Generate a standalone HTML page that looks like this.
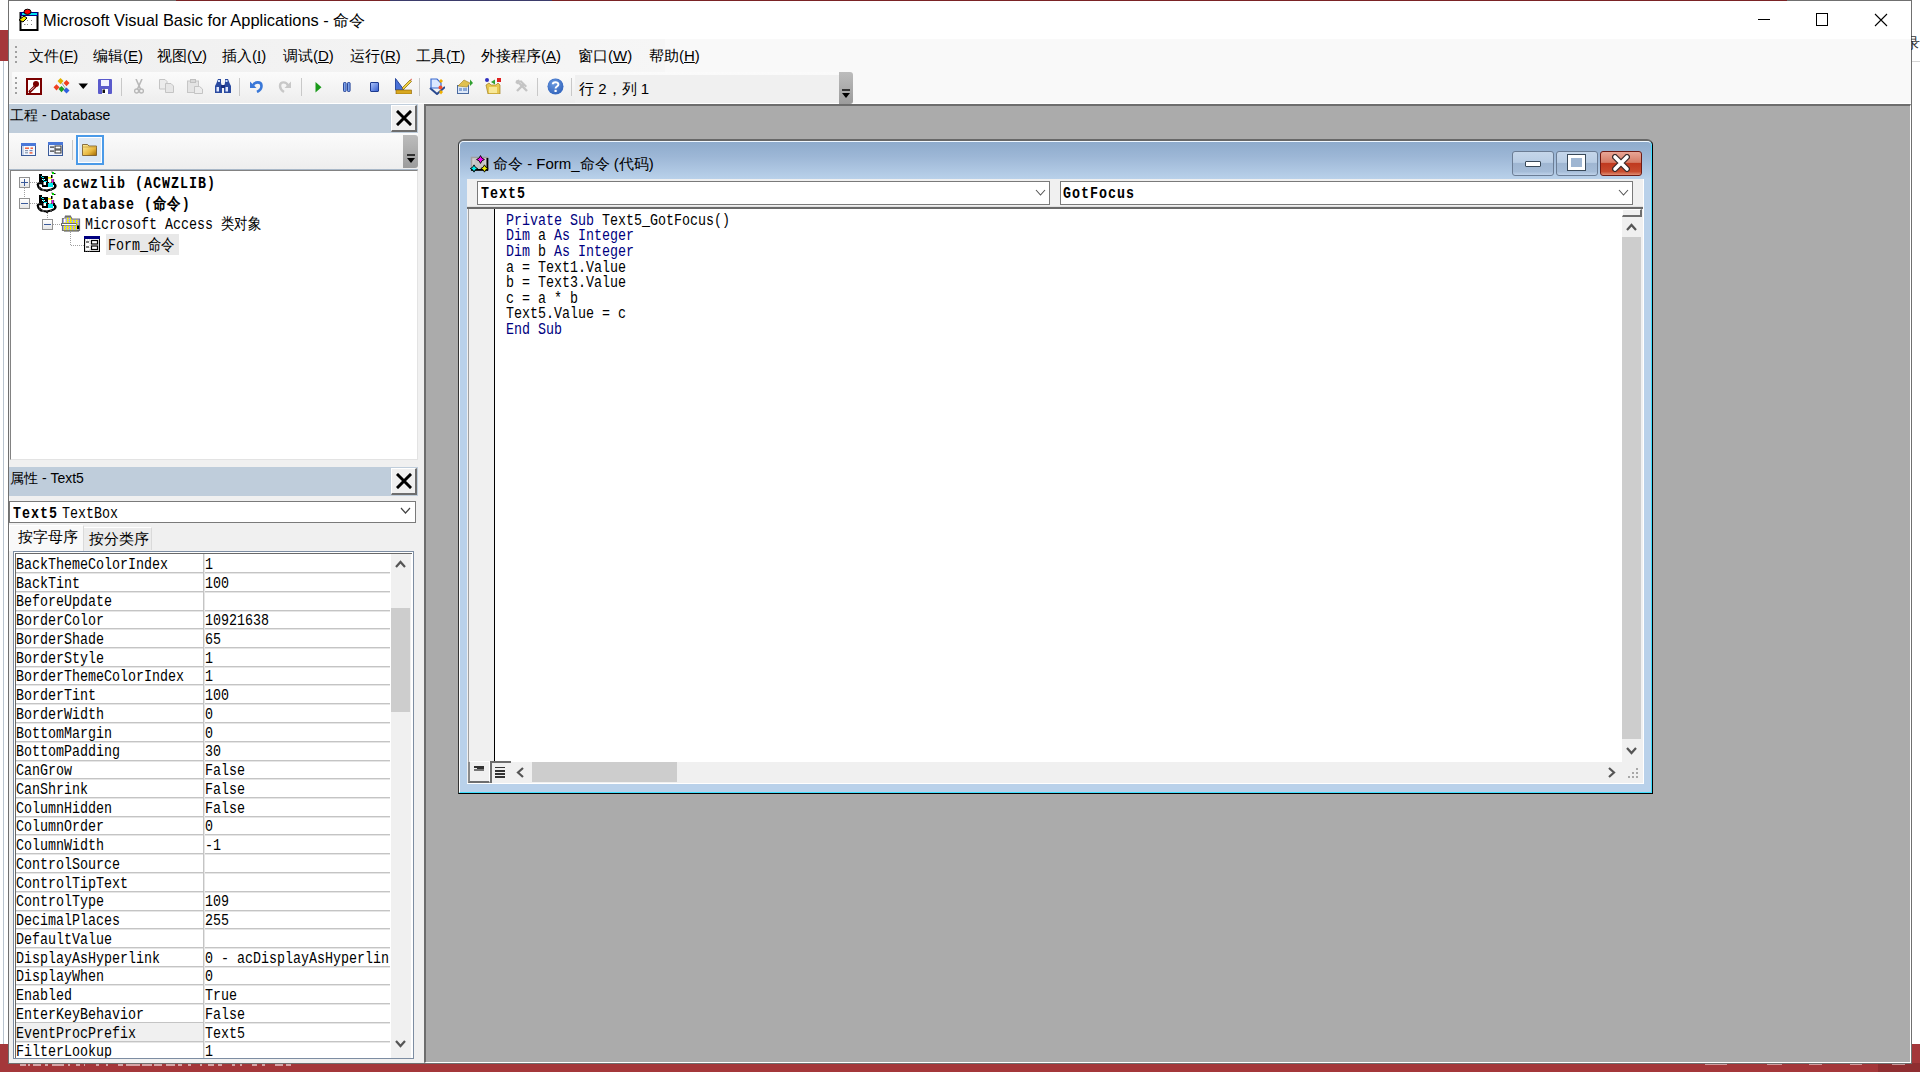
<!DOCTYPE html><html><head><meta charset="utf-8"><title>VBA</title><style>
html,body{margin:0;padding:0;}
body{width:1920px;height:1072px;overflow:hidden;position:relative;background:#fff;font-family:"Liberation Sans", sans-serif;}
div,span,svg{position:absolute;box-sizing:border-box;}
.t{white-space:pre;line-height:1;}
.m{font-family:"Liberation Mono", monospace;white-space:pre;line-height:1;transform-origin:0 0;transform:scaleX(0.8333);font-size:16px;}
</style></head><body>
<div style="left:0px;top:30px;width:8px;height:31px;background:#a4373a"></div>
<div style="left:3px;top:61px;width:1px;height:983px;background:#b9c4cf"></div>
<div style="left:0px;top:1044px;width:8px;height:28px;background:#a4373a"></div>
<div style="left:0px;top:1063px;width:1920px;height:9px;background:#a4373a"></div>
<div style="left:1911px;top:1044px;width:9px;height:28px;background:#a4373a"></div>
<div style="left:1878px;top:1063px;width:42px;height:9px;background:#8f2e31"></div>
<div style="left:1911px;top:61px;width:9px;height:1px;background:#d6d6d6"></div>
<div style="left:8px;top:0px;width:1904px;height:1064px;border:1px solid #707070;background:#fff"></div>
<div class="t" style="left:43px;top:12px;font-size:16.4px;color:#000">Microsoft Visual Basic for Applications - 命令</div>
<div style="left:1758px;top:19px;width:12px;height:1px;background:#000"></div>
<div style="left:1816px;top:13px;width:12px;height:13px;border:1px solid #000"></div>
<svg style="left:1874px;top:13px" width="14" height="14" viewBox="0 0 14 14"><path d="M1 1L13 13M13 1L1 13" stroke="#000" stroke-width="1.1"/></svg>
<div style="left:9px;top:39px;width:1902px;height:65px;background:#f9f9f9"></div>
<div style="left:9px;top:39px;width:656px;height:33px;background:linear-gradient(90deg,#efefef,#f6f6f6)"></div>
<div style="left:9px;top:72px;width:3px;height:31px;background:#efefef"></div>
<div style="left:12px;top:72px;width:841px;height:31px;background:linear-gradient(#fbfbfb,#f3f3f3 60%,#ededed);border-radius:3px 3px 0 0"></div>
<div style="left:9px;top:103px;width:1902px;height:1px;background:#fff"></div>
<div style="left:15px;top:46px;width:2px;height:2px;background:#a0a0a0"></div>
<div style="left:15px;top:77px;width:2px;height:2px;background:#a0a0a0"></div>
<div style="left:15px;top:51px;width:2px;height:2px;background:#a0a0a0"></div>
<div style="left:15px;top:82px;width:2px;height:2px;background:#a0a0a0"></div>
<div style="left:15px;top:56px;width:2px;height:2px;background:#a0a0a0"></div>
<div style="left:15px;top:87px;width:2px;height:2px;background:#a0a0a0"></div>
<div style="left:15px;top:61px;width:2px;height:2px;background:#a0a0a0"></div>
<div style="left:15px;top:92px;width:2px;height:2px;background:#a0a0a0"></div>
<div class="t" style="left:29px;top:48px;font-size:15px;color:#000">文件(<u>F</u>)</div>
<div class="t" style="left:93px;top:48px;font-size:15px;color:#000">编辑(<u>E</u>)</div>
<div class="t" style="left:157px;top:48px;font-size:15px;color:#000">视图(<u>V</u>)</div>
<div class="t" style="left:222px;top:48px;font-size:15px;color:#000">插入(<u>I</u>)</div>
<div class="t" style="left:283px;top:48px;font-size:15px;color:#000">调试(<u>D</u>)</div>
<div class="t" style="left:350px;top:48px;font-size:15px;color:#000">运行(<u>R</u>)</div>
<div class="t" style="left:416px;top:48px;font-size:15px;color:#000">工具(<u>T</u>)</div>
<div class="t" style="left:481px;top:48px;font-size:15px;color:#000">外接程序(<u>A</u>)</div>
<div class="t" style="left:578px;top:48px;font-size:15px;color:#000">窗口(<u>W</u>)</div>
<div class="t" style="left:649px;top:48px;font-size:15px;color:#000">帮助(<u>H</u>)</div>
<div style="left:575px;top:75px;width:264px;height:28px;background:#f0f0f0"></div>
<div class="t" style="left:579px;top:81px;font-size:15px;color:#000">行 2，列 1</div>
<div style="left:839px;top:72px;width:14px;height:32px;background:linear-gradient(#bcbcbc,#9c9c9c);border-radius:0 3px 3px 0"></div>
<div style="left:842px;top:89px;width:8px;height:2px;background:#333"></div>
<svg style="left:842px;top:93px" width="8" height="6" viewBox="0 0 8 6"><path d="M0 0H8L4 5z" fill="#000"/></svg>
<div style="left:121px;top:78px;width:1px;height:18px;background:#c8c8c8"></div>
<div style="left:239px;top:78px;width:1px;height:18px;background:#c8c8c8"></div>
<div style="left:301px;top:78px;width:1px;height:18px;background:#c8c8c8"></div>
<div style="left:419px;top:78px;width:1px;height:18px;background:#c8c8c8"></div>
<div style="left:537px;top:78px;width:1px;height:18px;background:#c8c8c8"></div>
<div style="left:571px;top:78px;width:1px;height:18px;background:#c8c8c8"></div>
<div style="left:424px;top:104px;width:1487px;height:959px;background:#ababab;border-top:2px solid #6d6d6d;border-left:2px solid #6d6d6d;border-right:1px solid #fff;border-bottom:1px solid #fff"></div>
<div style="left:417px;top:104px;width:7px;height:959px;background:#f0f0f0"></div>
<div style="left:9px;top:104px;width:408px;height:959px;background:#f0f0f0"></div>
<div style="left:9px;top:104px;width:409px;height:29px;background:#bfcddb"></div>
<div class="t" style="left:10px;top:108px;font-size:14px;color:#000">工程 - Database</div>
<div style="left:391px;top:105px;width:26px;height:27px;background:#f0f0f0;border-top:1px solid #fff;border-left:1px solid #fff;border-right:2px solid #6e6e6e;border-bottom:2px solid #6e6e6e"></div><svg style="left:396px;top:110px" width="16" height="16" viewBox="0 0 16 16"><path d="M2 2L14 14M14 2L2 14" stroke="#000" stroke-width="3" stroke-linecap="square"/></svg>
<div style="left:9px;top:133px;width:409px;height:36px;background:linear-gradient(#fbfbfb,#eeeeee)"></div>
<div style="left:403px;top:135px;width:15px;height:33px;background:linear-gradient(#bcbcbc,#9c9c9c);border-radius:0 3px 3px 0"></div>
<div style="left:407px;top:154px;width:8px;height:2px;background:#333"></div>
<svg style="left:407px;top:158px" width="8" height="6" viewBox="0 0 8 6"><path d="M0 0H8L4 5z" fill="#000"/></svg>
<div style="left:72px;top:140px;width:1px;height:20px;background:#c8c8c8"></div>
<div style="left:76px;top:136px;width:28px;height:29px;background:#cde4f7;border:1px solid #3399ff"></div>
<div style="left:9px;top:169px;width:409px;height:1px;background:#a9b8c8"></div>
<div style="left:10px;top:170px;width:408px;height:290px;background:#fff;border:1px solid #828282;border-right-color:#e3e3e3;border-bottom-color:#e3e3e3"></div>
<div style="left:9px;top:467px;width:409px;height:29px;background:#bfcddb"></div>
<div class="t" style="left:10px;top:471px;font-size:14px;color:#000">属性 - Text5</div>
<div style="left:391px;top:468px;width:26px;height:27px;background:#f0f0f0;border-top:1px solid #fff;border-left:1px solid #fff;border-right:2px solid #6e6e6e;border-bottom:2px solid #6e6e6e"></div><svg style="left:396px;top:473px" width="16" height="16" viewBox="0 0 16 16"><path d="M2 2L14 14M14 2L2 14" stroke="#000" stroke-width="3" stroke-linecap="square"/></svg>
<div style="left:9px;top:501px;width:407px;height:22px;background:#fff;border:1px solid #7a7a7a"></div>
<svg style="left:400px;top:507px" width="11" height="8" viewBox="0 0 11 8"><path d="M1 1L5.5 6L10 1" stroke="#444" stroke-width="1.2" fill="none"/></svg>
<div style="left:9px;top:525px;width:75px;height:26px;background:#f9f9f9;border-top:1px solid #fff;border-left:1px solid #fff;border-right:1px solid #dadada"></div>
<div style="left:84px;top:527px;width:68px;height:23px;background:#ececec;border-top:1px solid #fff;border-right:1px solid #dadada"></div>
<div class="t" style="left:18px;top:529px;font-size:15px;color:#000">按字母序</div>
<div class="t" style="left:89px;top:531px;font-size:15px;color:#000">按分类序</div>
<div style="left:13px;top:551px;width:401px;height:508px;background:#fff;border:1px solid #7d8da2"></div>
<div style="left:15px;top:553px;width:397px;height:505px;background:#fff;border-top:1px solid #696969;border-left:1px solid #696969;overflow:hidden"><div style="left:0px;top:18px;width:374px;height:1px;background:#c4c4c4"></div><div style="left:0px;top:19px;width:374px;height:1px;background:#e6e6e6"></div><div class="m" style="left:0px;top:2.99px;color:#000">BackThemeColorIndex</div><div class="m" style="left:189px;top:2.99px;color:#000">1</div><div style="left:0px;top:37px;width:374px;height:1px;background:#c4c4c4"></div><div style="left:0px;top:38px;width:374px;height:1px;background:#e6e6e6"></div><div class="m" style="left:0px;top:21.74px;color:#000">BackTint</div><div class="m" style="left:189px;top:21.74px;color:#000">100</div><div style="left:0px;top:56px;width:374px;height:1px;background:#c4c4c4"></div><div style="left:0px;top:57px;width:374px;height:1px;background:#e6e6e6"></div><div class="m" style="left:0px;top:40.49px;color:#000">BeforeUpdate</div><div class="m" style="left:189px;top:40.49px;color:#000"></div><div style="left:0px;top:74px;width:374px;height:1px;background:#c4c4c4"></div><div style="left:0px;top:75px;width:374px;height:1px;background:#e6e6e6"></div><div class="m" style="left:0px;top:59.24px;color:#000">BorderColor</div><div class="m" style="left:189px;top:59.24px;color:#000">10921638</div><div style="left:0px;top:93px;width:374px;height:1px;background:#c4c4c4"></div><div style="left:0px;top:94px;width:374px;height:1px;background:#e6e6e6"></div><div class="m" style="left:0px;top:77.99px;color:#000">BorderShade</div><div class="m" style="left:189px;top:77.99px;color:#000">65</div><div style="left:0px;top:112px;width:374px;height:1px;background:#c4c4c4"></div><div style="left:0px;top:113px;width:374px;height:1px;background:#e6e6e6"></div><div class="m" style="left:0px;top:96.74px;color:#000">BorderStyle</div><div class="m" style="left:189px;top:96.74px;color:#000">1</div><div style="left:0px;top:130px;width:374px;height:1px;background:#c4c4c4"></div><div style="left:0px;top:131px;width:374px;height:1px;background:#e6e6e6"></div><div class="m" style="left:0px;top:115.49px;color:#000">BorderThemeColorIndex</div><div class="m" style="left:189px;top:115.49px;color:#000">1</div><div style="left:0px;top:149px;width:374px;height:1px;background:#c4c4c4"></div><div style="left:0px;top:150px;width:374px;height:1px;background:#e6e6e6"></div><div class="m" style="left:0px;top:134.24px;color:#000">BorderTint</div><div class="m" style="left:189px;top:134.24px;color:#000">100</div><div style="left:0px;top:168px;width:374px;height:1px;background:#c4c4c4"></div><div style="left:0px;top:169px;width:374px;height:1px;background:#e6e6e6"></div><div class="m" style="left:0px;top:152.99px;color:#000">BorderWidth</div><div class="m" style="left:189px;top:152.99px;color:#000">0</div><div style="left:0px;top:187px;width:374px;height:1px;background:#c4c4c4"></div><div style="left:0px;top:188px;width:374px;height:1px;background:#e6e6e6"></div><div class="m" style="left:0px;top:171.74px;color:#000">BottomMargin</div><div class="m" style="left:189px;top:171.74px;color:#000">0</div><div style="left:0px;top:206px;width:374px;height:1px;background:#c4c4c4"></div><div style="left:0px;top:207px;width:374px;height:1px;background:#e6e6e6"></div><div class="m" style="left:0px;top:190.49px;color:#000">BottomPadding</div><div class="m" style="left:189px;top:190.49px;color:#000">30</div><div style="left:0px;top:224px;width:374px;height:1px;background:#c4c4c4"></div><div style="left:0px;top:225px;width:374px;height:1px;background:#e6e6e6"></div><div class="m" style="left:0px;top:209.24px;color:#000">CanGrow</div><div class="m" style="left:189px;top:209.24px;color:#000">False</div><div style="left:0px;top:243px;width:374px;height:1px;background:#c4c4c4"></div><div style="left:0px;top:244px;width:374px;height:1px;background:#e6e6e6"></div><div class="m" style="left:0px;top:227.99px;color:#000">CanShrink</div><div class="m" style="left:189px;top:227.99px;color:#000">False</div><div style="left:0px;top:262px;width:374px;height:1px;background:#c4c4c4"></div><div style="left:0px;top:263px;width:374px;height:1px;background:#e6e6e6"></div><div class="m" style="left:0px;top:246.74px;color:#000">ColumnHidden</div><div class="m" style="left:189px;top:246.74px;color:#000">False</div><div style="left:0px;top:280px;width:374px;height:1px;background:#c4c4c4"></div><div style="left:0px;top:281px;width:374px;height:1px;background:#e6e6e6"></div><div class="m" style="left:0px;top:265.49px;color:#000">ColumnOrder</div><div class="m" style="left:189px;top:265.49px;color:#000">0</div><div style="left:0px;top:299px;width:374px;height:1px;background:#c4c4c4"></div><div style="left:0px;top:300px;width:374px;height:1px;background:#e6e6e6"></div><div class="m" style="left:0px;top:284.24px;color:#000">ColumnWidth</div><div class="m" style="left:189px;top:284.24px;color:#000">-1</div><div style="left:0px;top:318px;width:374px;height:1px;background:#c4c4c4"></div><div style="left:0px;top:319px;width:374px;height:1px;background:#e6e6e6"></div><div class="m" style="left:0px;top:302.99px;color:#000">ControlSource</div><div class="m" style="left:189px;top:302.99px;color:#000"></div><div style="left:0px;top:337px;width:374px;height:1px;background:#c4c4c4"></div><div style="left:0px;top:338px;width:374px;height:1px;background:#e6e6e6"></div><div class="m" style="left:0px;top:321.74px;color:#000">ControlTipText</div><div class="m" style="left:189px;top:321.74px;color:#000"></div><div style="left:0px;top:356px;width:374px;height:1px;background:#c4c4c4"></div><div style="left:0px;top:357px;width:374px;height:1px;background:#e6e6e6"></div><div class="m" style="left:0px;top:340.49px;color:#000">ControlType</div><div class="m" style="left:189px;top:340.49px;color:#000">109</div><div style="left:0px;top:374px;width:374px;height:1px;background:#c4c4c4"></div><div style="left:0px;top:375px;width:374px;height:1px;background:#e6e6e6"></div><div class="m" style="left:0px;top:359.24px;color:#000">DecimalPlaces</div><div class="m" style="left:189px;top:359.24px;color:#000">255</div><div style="left:0px;top:393px;width:374px;height:1px;background:#c4c4c4"></div><div style="left:0px;top:394px;width:374px;height:1px;background:#e6e6e6"></div><div class="m" style="left:0px;top:377.99px;color:#000">DefaultValue</div><div class="m" style="left:189px;top:377.99px;color:#000"></div><div style="left:0px;top:412px;width:374px;height:1px;background:#c4c4c4"></div><div style="left:0px;top:413px;width:374px;height:1px;background:#e6e6e6"></div><div class="m" style="left:0px;top:396.74px;color:#000">DisplayAsHyperlink</div><div class="m" style="left:189px;top:396.74px;color:#000">0 - acDisplayAsHyperlin</div><div style="left:0px;top:430px;width:374px;height:1px;background:#c4c4c4"></div><div style="left:0px;top:431px;width:374px;height:1px;background:#e6e6e6"></div><div class="m" style="left:0px;top:415.49px;color:#000">DisplayWhen</div><div class="m" style="left:189px;top:415.49px;color:#000">0</div><div style="left:0px;top:449px;width:374px;height:1px;background:#c4c4c4"></div><div style="left:0px;top:450px;width:374px;height:1px;background:#e6e6e6"></div><div class="m" style="left:0px;top:434.24px;color:#000">Enabled</div><div class="m" style="left:189px;top:434.24px;color:#000">True</div><div style="left:0px;top:468px;width:374px;height:1px;background:#c4c4c4"></div><div style="left:0px;top:469px;width:374px;height:1px;background:#e6e6e6"></div><div class="m" style="left:0px;top:452.99px;color:#000">EnterKeyBehavior</div><div class="m" style="left:189px;top:452.99px;color:#000">False</div><div style="left:0px;top:469px;width:187px;height:18px;background:#f0f0f0"></div><div style="left:0px;top:487px;width:374px;height:1px;background:#c4c4c4"></div><div style="left:0px;top:488px;width:374px;height:1px;background:#e6e6e6"></div><div class="m" style="left:0px;top:471.74px;color:#000">EventProcPrefix</div><div class="m" style="left:189px;top:471.74px;color:#000">Text5</div><div style="left:0px;top:506px;width:374px;height:1px;background:#c4c4c4"></div><div style="left:0px;top:507px;width:374px;height:1px;background:#e6e6e6"></div><div class="m" style="left:0px;top:490.49px;color:#000">FilterLookup</div><div class="m" style="left:189px;top:490.49px;color:#000">1</div><div style="left:187px;top:0px;width:1px;height:505px;background:#c4c4c4"></div><div style="left:188px;top:0px;width:1px;height:505px;background:#e6e6e6"></div></div>
<div style="left:391px;top:554px;width:20px;height:504px;background:#f0f0f0"></div>
<div style="left:391px;top:608px;width:19px;height:104px;background:#cdcdcd"></div>
<svg style="left:395px;top:560px" width="11" height="9" viewBox="0 0 11 9"><path d="M1 7L5.5 2L10 7" stroke="#555" stroke-width="2.2" fill="none"/></svg>
<svg style="left:395px;top:1039px" width="11" height="9" viewBox="0 0 11 9"><path d="M1 2L5.5 7L10 2" stroke="#555" stroke-width="2.2" fill="none"/></svg>
<div style="left:458px;top:139px;width:1195px;height:655px;background:#b9d1ea;border:1px solid #333;border-top:2px solid #686868;border-right-color:#000;border-bottom-color:#000;border-radius:6px 6px 0 0"></div>
<div style="left:459px;top:141px;width:1193px;height:652px;border-right:1px solid #3ee0ff;border-bottom:1px solid #3ee0ff;border-top:1px solid #f0f8ff;border-left:1px solid #fff;border-radius:5px 5px 0 0"></div>
<div style="left:460px;top:142px;width:1191px;height:37px;background:linear-gradient(#8eabcc,#9db7d6 40%,#b9d1ea);border-radius:4px 4px 0 0"></div>
<div class="t" style="left:493px;top:156px;font-size:15px;color:#000">命令 - Form_命令 (代码)</div>
<div style="left:1512px;top:151px;width:42px;height:25px;background:linear-gradient(#c5d6ea 0%,#b9cde4 45%,#9fb6d2 50%,#a5bcd7 85%,#bfd3ea 100%);border:1px solid #6b7d95;border-radius:3px"></div>
<div style="left:1556px;top:151px;width:42px;height:25px;background:linear-gradient(#c5d6ea 0%,#b9cde4 45%,#9fb6d2 50%,#a5bcd7 85%,#bfd3ea 100%);border:1px solid #6b7d95;border-radius:3px"></div>
<div style="left:1600px;top:151px;width:42px;height:25px;background:linear-gradient(#e8a696 0%,#d67c66 45%,#c0391f 50%,#c74b2e 85%,#e08e74 100%);border:1px solid #6e1b14;border-radius:3px"></div>
<div style="left:1525px;top:161px;width:16px;height:6px;background:#fff;border:1px solid #3a4a5a;border-radius:1px"></div>
<div style="left:1568px;top:155px;width:17px;height:15px;background:#9fb6d2;border:3px solid #fff;outline:1px solid #3a4a5a"></div>
<svg style="left:1612px;top:154px" width="18" height="18" viewBox="0 0 18 18"><path d="M3 3L15 15M15 3L3 15" stroke="#3a2a2a" stroke-width="6" stroke-linecap="round"/><path d="M3 3L15 15M15 3L3 15" stroke="#fff" stroke-width="3.6" stroke-linecap="round"/></svg>
<div style="left:467px;top:179px;width:1177px;height:605px;background:#f0f0f0;border-right:1px solid #fff;border-bottom:1px solid #fff"></div>
<div style="left:477px;top:181px;width:573px;height:24px;background:#fff;border:1px solid #7a7a7a"></div>
<div style="left:1060px;top:181px;width:573px;height:24px;background:#fff;border:1px solid #7a7a7a"></div>
<svg style="left:1035px;top:189px" width="11" height="8" viewBox="0 0 11 8"><path d="M1 1L5.5 6L10 1" stroke="#555" stroke-width="1.1" fill="none"/></svg>
<svg style="left:1618px;top:189px" width="11" height="8" viewBox="0 0 11 8"><path d="M1 1L5.5 6L10 1" stroke="#555" stroke-width="1.1" fill="none"/></svg>
<div style="left:467px;top:206px;width:1176px;height:1px;background:#e0e0e0"></div>
<div style="left:467px;top:207px;width:1176px;height:2px;background:#6a6a6a"></div>
<div style="left:468px;top:209px;width:26px;height:553px;background:#f0f0f0;border-left:1px solid #a0a0a0"></div>
<div style="left:494px;top:209px;width:1px;height:553px;background:#000"></div>
<div style="left:495px;top:209px;width:1127px;height:553px;background:#fff"></div>
<div style="left:1622px;top:209px;width:20px;height:553px;background:#f0f0f0"></div>
<div style="left:1622px;top:209px;width:20px;height:8px;background:#f0f0f0;border-top:1px solid #fff;border-left:1px solid #fff;border-right:2px solid #6e6e6e;border-bottom:2px solid #6e6e6e"></div>
<div style="left:1622px;top:237px;width:19px;height:502px;background:#cdcdcd"></div>
<svg style="left:1626px;top:223px" width="11" height="9" viewBox="0 0 11 9"><path d="M1 7L5.5 2L10 7" stroke="#555" stroke-width="2.2" fill="none"/></svg>
<svg style="left:1626px;top:746px" width="11" height="9" viewBox="0 0 11 9"><path d="M1 2L5.5 7L10 2" stroke="#555" stroke-width="2.2" fill="none"/></svg>
<div style="left:468px;top:762px;width:1175px;height:21px;background:#f0f0f0"></div>
<div style="left:468px;top:761px;width:22px;height:22px;background:#f0f0f0;border-top:1px solid #fff;border-left:2px solid #8a8a8a;border-right:1px solid #fff;border-bottom:2px solid #6e6e6e"></div>
<div style="left:490px;top:761px;width:21px;height:22px;background:#f0f0f0;border-top:2px solid #6e6e6e;border-left:2px solid #6e6e6e"></div>
<div style="left:474px;top:766px;width:10px;height:2px;background:#333"></div>
<div style="left:474px;top:769px;width:10px;height:2px;background:#777"></div>
<div style="left:477px;top:768px;width:7px;height:1px;background:#333"></div>
<div style="left:495px;top:767px;width:10px;height:1px;background:#333"></div>
<div style="left:495px;top:770px;width:10px;height:1.5px;background:#333"></div>
<div style="left:495px;top:773px;width:10px;height:1.5px;background:#333"></div>
<div style="left:495px;top:776px;width:10px;height:1.5px;background:#333"></div>
<div style="left:532px;top:762px;width:145px;height:20px;background:#cdcdcd"></div>
<svg style="left:516px;top:767px" width="9" height="11" viewBox="0 0 9 11"><path d="M7 1L2 5.5L7 10" stroke="#555" stroke-width="2.2" fill="none"/></svg>
<svg style="left:1607px;top:767px" width="9" height="11" viewBox="0 0 9 11"><path d="M2 1L7 5.5L2 10" stroke="#555" stroke-width="2.2" fill="none"/></svg>
<div style="left:1636px;top:768px;width:2px;height:2px;background:#a8a8a8"></div>
<div style="left:1632px;top:772px;width:2px;height:2px;background:#a8a8a8"></div>
<div style="left:1636px;top:772px;width:2px;height:2px;background:#a8a8a8"></div>
<div style="left:1628px;top:776px;width:2px;height:2px;background:#a8a8a8"></div>
<div style="left:1632px;top:776px;width:2px;height:2px;background:#a8a8a8"></div>
<div style="left:1636px;top:776px;width:2px;height:2px;background:#a8a8a8"></div>
<div class="m" style="left:506px;top:212.64px"><span style="position:static;color:#000080">Private Sub </span><span style="position:static;color:#000">Text5_GotFocus()</span></div>
<div class="m" style="left:506px;top:228.27px"><span style="position:static;color:#000080">Dim </span><span style="position:static;color:#000">a </span><span style="position:static;color:#000080">As Integer</span></div>
<div class="m" style="left:506px;top:243.89px"><span style="position:static;color:#000080">Dim </span><span style="position:static;color:#000">b </span><span style="position:static;color:#000080">As Integer</span></div>
<div class="m" style="left:506px;top:259.51px"><span style="position:static;color:#000">a = Text1.Value</span></div>
<div class="m" style="left:506px;top:275.14px"><span style="position:static;color:#000">b = Text3.Value</span></div>
<div class="m" style="left:506px;top:290.76px"><span style="position:static;color:#000">c = a * b</span></div>
<div class="m" style="left:506px;top:306.39px"><span style="position:static;color:#000">Text5.Value = c</span></div>
<div class="m" style="left:506px;top:322.01px"><span style="position:static;color:#000080">End Sub</span></div>
<div class="m" style="left:481px;top:186.14px;font-weight:bold;letter-spacing:1.2px">Text5</div>
<div class="m" style="left:1063px;top:186.14px;font-weight:bold;letter-spacing:1.2px">GotFocus</div>
<div class="m" style="left:13px;top:505.94px;font-weight:bold;letter-spacing:1.2px">Text5</div>
<div class="m" style="left:62px;top:505.94px">TextBox</div>
<div style="left:24px;top:188px;width:1px;height:10px;background:repeating-linear-gradient(180deg,#a0a0a0 0 1px,transparent 1px 2px)"></div>
<div style="left:30px;top:182px;width:7px;height:1px;background:repeating-linear-gradient(90deg,#a0a0a0 0 1px,transparent 1px 2px)"></div>
<div style="left:30px;top:203px;width:7px;height:1px;background:repeating-linear-gradient(90deg,#a0a0a0 0 1px,transparent 1px 2px)"></div>
<div style="left:47px;top:213px;width:1px;height:6px;background:repeating-linear-gradient(180deg,#a0a0a0 0 1px,transparent 1px 2px)"></div>
<div style="left:53px;top:224px;width:8px;height:1px;background:repeating-linear-gradient(90deg,#a0a0a0 0 1px,transparent 1px 2px)"></div>
<div style="left:70px;top:232px;width:1px;height:13px;background:repeating-linear-gradient(180deg,#a0a0a0 0 1px,transparent 1px 2px)"></div>
<div style="left:71px;top:245px;width:13px;height:1px;background:repeating-linear-gradient(90deg,#a0a0a0 0 1px,transparent 1px 2px)"></div>
<div style="left:19px;top:177px;width:11px;height:11px;background:linear-gradient(#fff,#e6e6e6);border:1px solid #919191"></div><div style="left:21px;top:182px;width:7px;height:1px;background:#3b5b9b"></div><div style="left:24px;top:179px;width:1px;height:7px;background:#3b5b9b"></div>
<div style="left:19px;top:198px;width:11px;height:11px;background:linear-gradient(#fff,#e6e6e6);border:1px solid #919191"></div><div style="left:21px;top:203px;width:7px;height:1px;background:#3b5b9b"></div>
<div style="left:42px;top:219px;width:11px;height:11px;background:linear-gradient(#fff,#e6e6e6);border:1px solid #919191"></div><div style="left:44px;top:224px;width:7px;height:1px;background:#3b5b9b"></div>
<div class="m" style="left:63px;top:175.54px;font-weight:bold;letter-spacing:1.2px">acwzlib (ACWZLIB)</div>
<div class="m" style="left:63px;top:196.54px;font-weight:bold;letter-spacing:1.2px">Database (命令)</div>
<div class="m" style="left:85px;top:217.24px">Microsoft Access 类对象</div>
<div style="left:106px;top:234px;width:73px;height:21px;background:#e8e8e8"></div>
<div class="m" style="left:108px;top:238.24px">Form_命令</div>
<svg style="left:18px;top:8px" width="22" height="23" viewBox="0 0 22 23"><rect x="2.5" y="5" width="17" height="17" fill="#fff" stroke="#000" stroke-width="2"/><rect x="2" y="4" width="18" height="4" fill="#000080"/><rect x="4" y="5" width="15" height="2" fill="#00e0f0"/><circle cx="6" cy="13" r="0" /><path d="M1 12L6 8L9 10L5 14z" fill="#f0e000" stroke="#000" stroke-width="1"/><ellipse cx="9.5" cy="3.8" rx="3.5" ry="2.6" fill="#ff0000" stroke="#000" stroke-width="1"/><rect x="9" y="12" width="1" height="1" fill="#888"/><rect x="13" y="12" width="1" height="1" fill="#888"/><rect x="9" y="16" width="1" height="1" fill="#888"/><rect x="13" y="16" width="1" height="1" fill="#888"/><rect x="6" y="16" width="1.5" height="1" fill="#888"/></svg>
<svg style="left:26px;top:78px" width="16" height="17" viewBox="0 0 16 17"><rect x="1" y="1" width="14" height="15" fill="#fff" stroke="#7a0000" stroke-width="2"/><path d="M4 13.5L9 8.5" stroke="#7a0000" stroke-width="3" stroke-linecap="round"/><circle cx="10" cy="6" r="3" fill="#7a0000"/><path d="M4.5 12.5L8.5 9" stroke="#fff" stroke-width="0.8"/></svg>
<svg style="left:52px;top:77px" width="20" height="18" viewBox="0 0 20 18"><path d="M9 5L14 12M5 10L14 13" stroke="#9aa" stroke-width="1"/><path d="M8.5 1L11.5 4L8.5 7.2L5.5 4z" fill="#e2b000"/><path d="M14.5 3L17.5 6L14.5 9.2L11.5 6z" fill="#f04020"/><path d="M4.5 7.300000000000001L7.5 10.3L4.5 13.5L1.5 10.3z" fill="#f04020"/><path d="M9.5 9L12.5 12L9.5 15.2L6.5 12z" fill="#20a020"/><path d="M14.5 10.4L17.5 13.4L14.5 16.6L11.5 13.4z" fill="#3060e0"/></svg>
<svg style="left:78px;top:83px" width="11" height="7" viewBox="0 0 11 7"><path d="M0.5 0.5H10L5.25 6z" fill="#000"/></svg>
<svg style="left:98px;top:79px" width="14" height="15" viewBox="0 0 14 15"><rect x="0" y="0" width="14" height="15" rx="1" fill="#5a5acc"/><rect x="3" y="1" width="8" height="6" fill="#f2f2ff"/><rect x="4" y="10" width="6" height="5" fill="#fff"/><rect x="4.5" y="10.5" width="2.5" height="3.5" fill="#111"/></svg>
<svg style="left:134px;top:79px" width="10" height="15" viewBox="0 0 10 15"><path d="M2 0L6.5 10M8 0L3.5 10" stroke="#b8b8b8" stroke-width="1.6"/><circle cx="2.6" cy="12" r="2" fill="none" stroke="#b8b8b8" stroke-width="1.4"/><circle cx="7.4" cy="12" r="2" fill="none" stroke="#b8b8b8" stroke-width="1.4"/></svg>
<svg style="left:159px;top:79px" width="15" height="14" viewBox="0 0 15 14"><path d="M0.5 0.5H6L8 2.5V10H0.5z" fill="#ececec" stroke="#c4c4c4"/><path d="M6.5 4.5H12L14.5 7V13.5H6.5z" fill="#e6e6e6" stroke="#c4c4c4"/></svg>
<svg style="left:187px;top:79px" width="16" height="15" viewBox="0 0 16 15"><rect x="0.5" y="2" width="11" height="11.5" fill="#e4e4e4" stroke="#c6c6c6"/><rect x="3.5" y="0.5" width="5" height="3" fill="#d8d8d8" stroke="#c0c0c0"/><path d="M7.5 7.5H12.5L15.5 10V14.5H7.5z" fill="#ececec" stroke="#c4c4c4"/></svg>
<svg style="left:215px;top:79px" width="16" height="14" viewBox="0 0 16 14"><path d="M3 0H6V4L7 7V14H0V7L1.5 4z" fill="#2a4aa0"/><path d="M10 0H13L14.5 4L16 7V14H9V7L10 4z" fill="#2a4aa0"/><rect x="6" y="6" width="4" height="3" fill="#1a3080"/><rect x="1.5" y="8" width="2.5" height="4.5" fill="#dfe8ff"/><rect x="10.5" y="8" width="2.5" height="4.5" fill="#dfe8ff"/><rect x="3" y="1" width="2" height="2" fill="#cfe0ff"/><rect x="10.5" y="1" width="2" height="2" fill="#cfe0ff"/></svg>
<svg style="left:250px;top:79px" width="14" height="14" viewBox="0 0 14 14"><path d="M3 6.5C4.5 2.5 11.5 2 11.5 7C11.5 10 9 12 7 13" stroke="#3a78d8" stroke-width="2.6" fill="none"/><path d="M0 2.5V9H6.5z" fill="#3a78d8"/></svg>
<svg style="left:278px;top:79px" width="13" height="14" viewBox="0 0 13 14"><path d="M10 6.5C8.5 2.5 2 2 2 7C2 10 4.5 12 6 13" stroke="#c8c8c8" stroke-width="2.4" fill="none"/><path d="M13 2.5V9H6.5z" fill="#c8c8c8"/></svg>
<svg style="left:315px;top:82px" width="7" height="11" viewBox="0 0 7 11"><path d="M0.5 0L6.5 5.25L0.5 10.5z" fill="#1a9a1a"/></svg>
<svg style="left:343px;top:82px" width="8" height="10" viewBox="0 0 8 10"><rect x="0.5" y="0.5" width="2.6" height="9" rx="0.8" fill="#7aa0ea" stroke="#1c3a90" stroke-width="0.9"/><rect x="4.5" y="0.5" width="2.6" height="9" rx="0.8" fill="#7aa0ea" stroke="#1c3a90" stroke-width="0.9"/></svg>
<div style="left:370px;top:82px;width:9px;height:10px;background:linear-gradient(135deg,#a8c0f8,#3a62d0);border:1px solid #1c3a90;border-radius:1px"></div>
<svg style="left:395px;top:78px" width="17" height="16" viewBox="0 0 17 16"><path d="M0.5 0.5V12H9z" fill="#4a72d8" stroke="#2a4aa0" stroke-width="1"/><path d="M7 10L15 2L16.5 3.5L8.5 11.5z" fill="#f0d040" stroke="#806000" stroke-width="0.7"/><rect x="1" y="12" width="15.5" height="4" fill="#d8a820" stroke="#8a6000" stroke-width="0.6"/><path d="M15 1.5L16.5 0.5L17 2.5" fill="#e06050"/></svg>
<svg style="left:429px;top:78px" width="16" height="17" viewBox="0 0 16 17"><path d="M1 10L8 16L16 9" stroke="#2a4a90" stroke-width="2" fill="none"/><path d="M2 1H8L12 5V10H2z" fill="#dce8ff" stroke="#3a6ad0" stroke-width="1.2"/><circle cx="11.5" cy="9.5" r="2" fill="#f05030"/><path d="M12 1L14 3L12 5L10 3z" fill="#f0b000"/><path d="M12 12L14 14L12 16.5L10 14z" fill="#f0b000"/></svg>
<svg style="left:457px;top:79px" width="16" height="15" viewBox="0 0 16 15"><rect x="0.5" y="6.5" width="11" height="8" fill="#dde8f8" stroke="#4a6aa0"/><rect x="2" y="9" width="3" height="3" fill="#8aa8d8"/><rect x="6" y="9" width="4" height="3" fill="#8aa8d8"/><path d="M1 7L7 1L13 4L10 8z" fill="#e0c050" stroke="#a08020" stroke-width="0.6"/><path d="M13 0.5L16 4L13 7z" fill="#30a030"/></svg>
<svg style="left:485px;top:78px" width="16" height="16" viewBox="0 0 16 16"><circle cx="2" cy="2" r="2" fill="#3030c0"/><path d="M6 4L10 1.5V6.5z" fill="#30a030"/><rect x="12" y="0" width="4" height="4" fill="#e02020"/><path d="M1 7L4 5L6 7H11L13 5L15 7V16H3z" fill="#e8c850" stroke="#a08020" stroke-width="0.7"/><rect x="4" y="9" width="8" height="6" fill="#f8e898"/></svg>
<svg style="left:515px;top:79px" width="14" height="14" viewBox="0 0 14 14"><path d="M2 12L9 5" stroke="#c4c4c4" stroke-width="2.4"/><path d="M6 1L12 7L10.5 8.5L4.5 2.5z" fill="#c4c4c4"/><path d="M4 4L12 12" stroke="#c4c4c4" stroke-width="2.4"/><path d="M1 1.5L4 0.5L5.5 3L3 5.5L0.5 4z" fill="#c4c4c4"/></svg>
<svg style="left:547px;top:78px" width="17" height="17" viewBox="0 0 17 17"><circle cx="8.5" cy="8.5" r="8" fill="#3d70c8"/><circle cx="8.5" cy="8.5" r="7.6" fill="url(#hg)"/><defs><radialGradient id="hg" cx="0.4" cy="0.3" r="0.8"><stop offset="0" stop-color="#6a9ae0"/><stop offset="1" stop-color="#2f60b8"/></radialGradient></defs><path d="M5.8 6.2C5.8 3.6 11.4 3.4 11.4 6.4C11.4 8.4 8.6 8.6 8.6 10.4" stroke="#fff" stroke-width="2" fill="none"/><rect x="7.5" y="11.8" width="2.2" height="2.2" fill="#fff"/></svg>
<svg style="left:21px;top:143px" width="15" height="13" viewBox="0 0 15 13"><rect x="0.5" y="0.5" width="14" height="12" fill="#f4f8ff" stroke="#3a5a98"/><rect x="0" y="0" width="15" height="3" fill="#4a78d8"/><rect x="1" y="3" width="2" height="9" fill="#c8d4e8"/><rect x="4" y="4.5" width="4" height="1.4" fill="#f05a30"/><rect x="9.5" y="4.5" width="2.5" height="1.4" fill="#f05a30"/><rect x="4" y="7" width="3" height="1.2" fill="#8898b0"/><rect x="8.5" y="7" width="3" height="1.2" fill="#7088b8"/><rect x="4" y="9.2" width="3" height="1.2" fill="#8898b0"/><rect x="8.5" y="9.2" width="3" height="1.4" fill="#f05a30"/></svg>
<svg style="left:48px;top:142px" width="15" height="14" viewBox="0 0 15 14"><rect x="0.5" y="0.5" width="14" height="13" fill="#eef3ff" stroke="#3a5a98"/><rect x="0" y="0" width="15" height="3" fill="#4a78d8"/><rect x="2" y="4.5" width="4" height="1.2" fill="#333"/><rect x="2" y="8.5" width="4" height="1.2" fill="#333"/><rect x="7" y="4" width="6" height="3" fill="#fff" stroke="#333" stroke-width="1"/><rect x="7" y="8" width="6" height="3" fill="#fff" stroke="#333" stroke-width="1"/></svg>
<div style="left:76px;top:135px;width:28px;height:30px;background:#dde8f4;border:2px solid #4a9ae8;box-shadow:inset 0 0 0 1px #fff"></div>
<svg style="left:82px;top:143px" width="15" height="13" viewBox="0 0 15 13"><defs><linearGradient id="fg" x1="0" y1="0" x2="1" y2="1"><stop offset="0" stop-color="#fff0a0"/><stop offset="0.6" stop-color="#e8b840"/><stop offset="1" stop-color="#a06800"/></linearGradient></defs><path d="M0.5 1.5H5.5L7 3H14.5V12.5H0.5z" fill="url(#fg)" stroke="#705020" stroke-width="0.8"/><path d="M0.5 4H14.5" stroke="#c8a040" stroke-width="0.8"/></svg>
<svg style="left:34px;top:170px" width="26" height="24" viewBox="0 0 26 24"><path d="M4 15.5C3 14 4.5 13 7 13L9 14H14L18 13.5C20 13.5 22 15 21.5 16.5C21 18 19 19 17 19.5L13 20.5L9 20C6 19.5 4 17 4 15.5z" fill="#fff" stroke="#000" stroke-width="2.2"/><rect x="8" y="19" width="2" height="2" fill="#444"/><rect x="12" y="20" width="2" height="2" fill="#222"/><rect x="16" y="19" width="2" height="2" fill="#444"/><rect x="5" y="17" width="2" height="2" fill="#333"/><rect x="5" y="4" width="3" height="8" fill="#000"/><rect x="6" y="6" width="6" height="3" fill="#000"/><rect x="11" y="6" width="3" height="7" fill="#000"/><rect x="8" y="10" width="6" height="7" fill="#000"/><rect x="9.5" y="12" width="2.5" height="3" fill="#fff"/><rect x="13" y="12" width="2" height="2" fill="#000"/><rect x="19" y="12" width="2" height="3" fill="#000"/><rect x="20" y="14" width="2" height="3" fill="#000"/><rect x="7" y="6" width="1" height="1" fill="#00e8f0"/><rect x="8" y="7" width="2" height="1" fill="#00e8f0"/><rect x="9" y="9" width="1" height="2" fill="#00e8f0"/><rect x="10" y="11" width="3" height="1" fill="#00e8f0"/><rect x="14" y="13" width="5" height="4" fill="#00e8f0"/><rect x="13" y="7" width="1" height="1" fill="#000"/><rect x="14" y="7" width="4" height="1.6" fill="#f0f000"/><rect x="17" y="5" width="1.5" height="3" fill="#000"/><rect x="18" y="2" width="2" height="2" fill="#00e000"/><rect x="17.5" y="1.5" width="1" height="1" fill="#000"/><rect x="20" y="3" width="1.5" height="1" fill="#000"/><rect x="18" y="9" width="1.5" height="3.5" fill="#f000f0"/><rect x="17.5" y="9" width="0.5" height="4" fill="#000"/><rect x="19.5" y="9" width="0.6" height="4" fill="#000"/></svg>
<svg style="left:34px;top:191px" width="26" height="24" viewBox="0 0 26 24"><path d="M4 15.5C3 14 4.5 13 7 13L9 14H14L18 13.5C20 13.5 22 15 21.5 16.5C21 18 19 19 17 19.5L13 20.5L9 20C6 19.5 4 17 4 15.5z" fill="#fff" stroke="#000" stroke-width="2.2"/><rect x="8" y="19" width="2" height="2" fill="#444"/><rect x="12" y="20" width="2" height="2" fill="#222"/><rect x="16" y="19" width="2" height="2" fill="#444"/><rect x="5" y="17" width="2" height="2" fill="#333"/><rect x="5" y="4" width="3" height="8" fill="#000"/><rect x="6" y="6" width="6" height="3" fill="#000"/><rect x="11" y="6" width="3" height="7" fill="#000"/><rect x="8" y="10" width="6" height="7" fill="#000"/><rect x="9.5" y="12" width="2.5" height="3" fill="#fff"/><rect x="13" y="12" width="2" height="2" fill="#000"/><rect x="19" y="12" width="2" height="3" fill="#000"/><rect x="20" y="14" width="2" height="3" fill="#000"/><rect x="7" y="6" width="1" height="1" fill="#00e8f0"/><rect x="8" y="7" width="2" height="1" fill="#00e8f0"/><rect x="9" y="9" width="1" height="2" fill="#00e8f0"/><rect x="10" y="11" width="3" height="1" fill="#00e8f0"/><rect x="14" y="13" width="5" height="4" fill="#00e8f0"/><rect x="13" y="7" width="1" height="1" fill="#000"/><rect x="14" y="7" width="4" height="1.6" fill="#f0f000"/><rect x="17" y="5" width="1.5" height="3" fill="#000"/><rect x="18" y="2" width="2" height="2" fill="#00e000"/><rect x="17.5" y="1.5" width="1" height="1" fill="#000"/><rect x="20" y="3" width="1.5" height="1" fill="#000"/><rect x="18" y="9" width="1.5" height="3.5" fill="#f000f0"/><rect x="17.5" y="9" width="0.5" height="4" fill="#000"/><rect x="19.5" y="9" width="0.6" height="4" fill="#000"/></svg>
<svg style="left:58px;top:212px" width="26" height="22" viewBox="0 0 26 22"><defs><pattern id="ck" width="3" height="2" patternUnits="userSpaceOnUse"><rect width="3" height="2" fill="#a8a8f0"/><rect width="2" height="1" fill="#f0f000"/><rect x="0" y="1" width="1" height="1" fill="#f0f000"/></pattern></defs><rect x="7" y="3.5" width="6" height="1.8" fill="#666"/><path d="M4.5 18.5V6.5H7V5H13L14 7H21.5V18.5z" fill="url(#ck)" stroke="#777" stroke-width="1.2"/><rect x="6" y="6.5" width="1.5" height="4" fill="#fff"/><rect x="3.5" y="11.5" width="14.5" height="2" fill="#fff" stroke="#6a6a6a" stroke-width="1"/><rect x="6" y="13.5" width="13" height="5" fill="url(#ck)"/><rect x="19" y="13.5" width="2.2" height="3.5" fill="#000"/><path d="M6 19H21" stroke="#666" stroke-width="1.2"/></svg>
<svg style="left:84px;top:236px" width="16" height="16" viewBox="0 0 16 16"><rect x="0.5" y="0.5" width="15" height="15" fill="#fff" stroke="#000" stroke-width="1.2"/><rect x="0" y="0" width="16" height="3" fill="#000080"/><rect x="7.5" y="4.5" width="6" height="3.5" fill="#fff" stroke="#000" stroke-width="1.2"/><rect x="7.5" y="10" width="6" height="3.5" fill="#fff" stroke="#000" stroke-width="1.2"/><path d="M2 6H5M2 11H5" stroke="#000" stroke-width="1.2"/><path d="M1 4H6V15H1" fill="none" stroke="#aaa" stroke-width="0.6" stroke-dasharray="1 1"/></svg>
<svg style="left:468px;top:152px" width="24" height="24" viewBox="0 0 24 24"><rect x="3.5" y="5.5" width="16" height="12.5" fill="#d0d0d0" stroke="#a0a0a0" stroke-width="1.5"/><rect x="18.5" y="6" width="1.8" height="12.5" fill="#000"/><rect x="3" y="17" width="17" height="1.8" fill="#000"/><rect x="6.5" y="7" width="10" height="10" fill="#c4c4c4"/><path d="M12.5 3.5800000000000005L13.9 6.1L16.419999999999998 7.5L13.9 8.9L12.5 11.42L11.1 8.9L8.58 7.5L11.1 6.1z" fill="#f000f0" stroke="#000" stroke-width="0.9"/><path d="M6 12.86L7.3 15.2L9.64 16.5L7.3 17.8L6 20.14L4.7 17.8L2.3600000000000003 16.5L4.7 15.2z" fill="#00f0f0" stroke="#000" stroke-width="0.9"/><path d="M16.5 12.86L17.8 15.2L20.14 16.5L17.8 17.8L16.5 20.14L15.2 17.8L12.86 16.5L15.2 15.2z" fill="#f0f000" stroke="#000" stroke-width="0.9"/></svg>
<div style="left:176px;top:0px;width:214px;height:1px;background:#7a2325"></div>
<div style="left:390px;top:0px;width:162px;height:1px;background:#3b3b6b"></div>
<div style="left:552px;top:0px;width:1235px;height:1px;background:#7a2325"></div>
<div style="left:1911px;top:30px;width:9px;height:22px;overflow:hidden"><div class="t" style="left:-6px;top:5px;font-size:15px;color:#333">录</div></div>
<div style="left:20px;top:1064px;width:6px;height:2px;background:rgba(255,255,255,.55)"></div>
<div style="left:28px;top:1064px;width:2px;height:2px;background:rgba(255,255,255,.55)"></div>
<div style="left:33px;top:1064px;width:8px;height:2px;background:rgba(255,255,255,.55)"></div>
<div style="left:45px;top:1064px;width:3px;height:2px;background:rgba(255,255,255,.55)"></div>
<div style="left:52px;top:1064px;width:12px;height:2px;background:rgba(255,255,255,.55)"></div>
<div style="left:68px;top:1064px;width:2px;height:2px;background:rgba(255,255,255,.55)"></div>
<div style="left:76px;top:1064px;width:4px;height:2px;background:rgba(255,255,255,.55)"></div>
<div style="left:84px;top:1064px;width:1px;height:2px;background:rgba(255,255,255,.55)"></div>
<div style="left:96px;top:1064px;width:3px;height:2px;background:rgba(255,255,255,.55)"></div>
<div style="left:106px;top:1064px;width:2px;height:2px;background:rgba(255,255,255,.55)"></div>
<div style="left:118px;top:1064px;width:5px;height:2px;background:rgba(255,255,255,.55)"></div>
<div style="left:126px;top:1064px;width:14px;height:2px;background:rgba(255,255,255,.55)"></div>
<div style="left:142px;top:1064px;width:10px;height:2px;background:rgba(255,255,255,.55)"></div>
<div style="left:154px;top:1064px;width:8px;height:2px;background:rgba(255,255,255,.55)"></div>
<div style="left:166px;top:1064px;width:9px;height:2px;background:rgba(255,255,255,.55)"></div>
<div style="left:178px;top:1064px;width:4px;height:2px;background:rgba(255,255,255,.55)"></div>
<div style="left:188px;top:1064px;width:3px;height:2px;background:rgba(255,255,255,.55)"></div>
<div style="left:200px;top:1064px;width:2px;height:2px;background:rgba(255,255,255,.55)"></div>
<div style="left:208px;top:1064px;width:6px;height:2px;background:rgba(255,255,255,.55)"></div>
<div style="left:218px;top:1064px;width:4px;height:2px;background:rgba(255,255,255,.55)"></div>
<div style="left:232px;top:1064px;width:3px;height:2px;background:rgba(255,255,255,.55)"></div>
<div style="left:240px;top:1064px;width:2px;height:2px;background:rgba(255,255,255,.55)"></div>
<div style="left:252px;top:1064px;width:5px;height:2px;background:rgba(255,255,255,.55)"></div>
<div style="left:262px;top:1064px;width:3px;height:2px;background:rgba(255,255,255,.55)"></div>
<div style="left:275px;top:1064px;width:8px;height:2px;background:rgba(255,255,255,.55)"></div>
<div style="left:286px;top:1064px;width:5px;height:2px;background:rgba(255,255,255,.55)"></div>
<div style="left:1705px;top:1064px;width:22px;height:1px;background:rgba(255,255,255,.5)"></div>
<div style="left:1767px;top:1064px;width:15px;height:1px;background:rgba(255,255,255,.5)"></div>
<div style="left:1809px;top:1064px;width:13px;height:1px;background:rgba(255,255,255,.5)"></div>
<div style="left:1850px;top:1064px;width:12px;height:1px;background:rgba(255,255,255,.5)"></div>
<div style="left:1892px;top:1064px;width:13px;height:1px;background:rgba(255,255,255,.5)"></div>
</body></html>
